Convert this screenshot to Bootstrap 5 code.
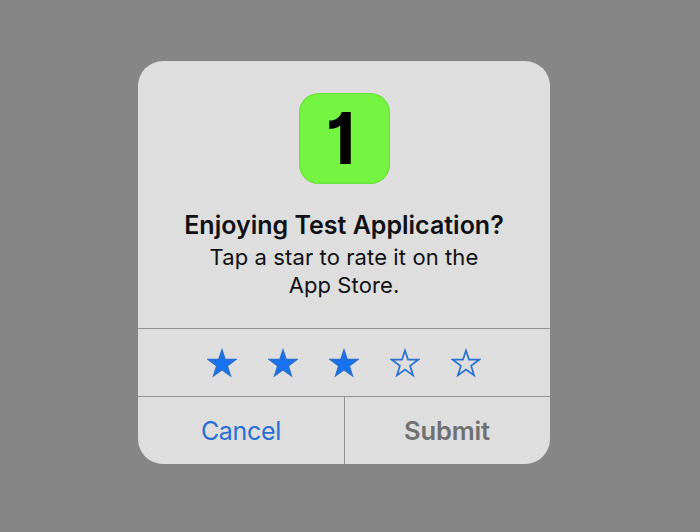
<!DOCTYPE html>
<html lang="en">
<head>
    <meta charset="UTF-8">
    <meta name="viewport" content="width=device-width, initial-scale=1">
    <title>Rate Test Application</title>
    <link href="https://cdn.jsdelivr.net/npm/bootstrap@5.3.0/dist/css/bootstrap.min.css" rel="stylesheet">
    <style>
        body {
            background: #868686;
            font-family: Inter, "Liberation Sans", sans-serif;
            color: #101012;
        }
        .screen {
            height: 532px;
            padding: 61px 0 0 138px;
        }
        .rate-dialog {
            width: 412px;
            height: 403px;
            background: #dedede;
            border-radius: 25px;
        }
        .rate-body {
            height: 267px;
            padding-top: 32px;
        }
        .app-icon {
            width: 91px;
            height: 91px;
            background: #76f442;
            border-radius: 20px;
            box-shadow: inset 0 0 2px #4fb92a;
            color: #000;
            font-size: 71px;
            font-weight: 700;
            font-feature-settings: "cv01";
            line-height: 91px;
            padding-right: 7px;
        }
        .rate-title {
            margin-top: 26px;
            font-size: 25px;
            font-weight: 600;
            line-height: 30px;
        }
        .rate-text {
            margin-top: 4px;
            width: 300px;
            font-size: 22px;
            line-height: 27.5px;
            letter-spacing: .1px;
        }
        .rule-top {
            border-top: 1px solid #929292;
        }
        .stars {
            height: 68px;
            gap: 31px;
            padding-top: 19px;
        }
        .star {
            width: 30px;
            height: 30px;
            stroke: #2870d2;
            fill: none;
        }
        .star-on {
            fill: #1672f0;
        }
        .actions {
            height: 68px;
        }
        .rate-btn {
            border: 0;
            border-radius: 0;
            padding: 0;
            font-size: 25.5px;
            line-height: 67px;
            letter-spacing: -.15px;
        }
        .btn-cancel {
            width: 207px;
            color: #286fd0;
            font-size: 25px;
            letter-spacing: -.3px;
            padding-top: 1px;
            border-right: 1px solid #929292 !important;
        }
        .btn-submit,
        .btn-submit:disabled {
            color: #707072;
            font-weight: 600;
            border: 0;
            padding-right: 1px;
            opacity: 1;
        }
    </style>
</head>
<body>
<svg class="d-none">
    <symbol id="star" viewBox="0 0 30 30">
        <path d="M15 2.5 L18 11.6 L28.2 11.7 L20.1 17.7 L23.1 27.4 L15 21.6 L6.9 27.4 L9.9 17.7 L1.8 11.7 L12 11.6 Z" stroke-width="1.7"/>
    </symbol>
</svg>
<main class="screen">
    <div class="rate-dialog d-flex flex-column overflow-hidden" role="dialog" aria-labelledby="rate-title">
        <div class="rate-body d-flex flex-column align-items-center text-center">
            <div class="app-icon">1</div>
            <h1 class="rate-title mb-0 text-nowrap" id="rate-title">Enjoying Test Application?</h1>
            <p class="rate-text mb-0">Tap a star to rate it on the<br>App Store.</p>
        </div>
        <div class="stars rule-top d-flex justify-content-center">
            <svg class="star star-on"><use href="#star"/></svg>
            <svg class="star star-on"><use href="#star"/></svg>
            <svg class="star star-on"><use href="#star"/></svg>
            <svg class="star"><use href="#star"/></svg>
            <svg class="star"><use href="#star"/></svg>
        </div>
        <div class="actions rule-top d-flex">
            <button type="button" class="btn rate-btn btn-cancel">Cancel</button>
            <button type="button" class="btn rate-btn btn-submit flex-fill" disabled>Submit</button>
        </div>
    </div>
</main>
<script src="https://cdn.jsdelivr.net/npm/bootstrap@5.3.0/dist/js/bootstrap.bundle.min.js"></script>
</body>
</html>
